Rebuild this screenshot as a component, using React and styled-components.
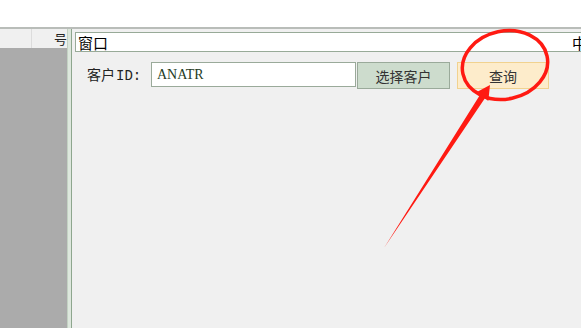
import React from "react";
import styled, { createGlobalStyle } from "styled-components";

const GlobalStyle = createGlobalStyle`
  html, body {
    margin: 0;
    padding: 0;
    background: #ffffff;
    overflow: hidden;
  }
`;

const Page = styled.div`
  position: relative;
  width: 581px;
  height: 328px;
  display: flex;
  flex-direction: column;
  font-family: "Noto Sans CJK SC", "Noto Sans", sans-serif;
  overflow: hidden;
`;

const TopBlank = styled.div`
  height: 27px;
  background: #ffffff;
`;

const Workspace = styled.div`
  flex: 1;
  display: flex;
  border-top: 2px solid #b9bdb9;
`;

const LeftPane = styled.div`
  width: 67px;
  display: flex;
  flex-direction: column;
`;

const LeftHeader = styled.div`
  height: 19px;
  display: flex;
  background: #f0f0f0;
`;

const HeaderCell = styled.div`
  width: ${(p) => p.w}px;
  border-right: ${(p) => (p.divider ? "1px solid #dcdcdc" : "none")};
  font-size: 13px;
  line-height: 19px;
  color: #222;
  overflow: hidden;
  white-space: nowrap;
  text-align: ${(p) => p.align || "left"};
`;

const LeftBody = styled.div`
  flex: 1;
  background: #ababab;
`;

const Splitter = styled.div`
  width: 3px;
  background: #dde7dd;
  border-left: 1px solid #c3d2c3;
  border-right: 1px solid #8ea68e;
`;

const RightPane = styled.div`
  flex: 1;
  background: #f0f0f0;
  padding: 3px 0 0 3px;
  display: flex;
  flex-direction: column;
`;

const TitleBox = styled.div`
  height: 18px;
  background: #ffffff;
  border: 1px solid #98aa98;
  border-right: none;
  display: flex;
  justify-content: space-between;
  align-items: center;
  padding-left: 2px;
  font-size: 15px;
  color: #000;
  overflow: hidden;
`;

const EdgeGlyph = styled.span`
  margin-right: -6px;
`;

const FormRow = styled.div`
  margin-top: 10px;
  padding-left: 12px;
  display: flex;
  align-items: flex-start;
`;

const Label = styled.span`
  width: 64px;
  font-size: 14px;
  line-height: 25px;
  color: #222;
  white-space: nowrap;
`;

const LabelCode = styled.span`
  font-family: "Liberation Mono", "DejaVu Sans Mono", monospace;
  font-size: 14px;
  margin-left: 1px;
`;

const Input = styled.div`
  width: 198px;
  height: 23px;
  border: 1px solid #9aaa9a;
  background: #ffffff;
  font-family: "Liberation Serif", "DejaVu Serif", serif;
  font-size: 14px;
  line-height: 23px;
  color: #1e3a1e;
  padding-left: 5px;
`;

const Button = styled.div`
  width: ${(p) => p.w}px;
  height: 25px;
  margin-left: ${(p) => p.gap}px;
  display: flex;
  align-items: center;
  justify-content: center;
  font-size: 14px;
  color: #333;
  background: ${(p) => (p.primary ? "#fdeccb" : "#cddccd")};
  border: 1px solid ${(p) => (p.primary ? "#f1d28f" : "#9aaa9a")};
`;

const Overlay = styled.svg`
  position: absolute;
  left: 0;
  top: 0;
  pointer-events: none;
`;

export default function App() {
  return (
    <Page>
      <GlobalStyle />
      <TopBlank />
      <Workspace>
        <LeftPane>
          <LeftHeader>
            <HeaderCell w={31} divider />
            <HeaderCell w={36} align="right">
              号
            </HeaderCell>
          </LeftHeader>
          <LeftBody />
        </LeftPane>
        <Splitter />
        <RightPane>
          <TitleBox>
            <span>窗口</span>
            <EdgeGlyph>中</EdgeGlyph>
          </TitleBox>
          <FormRow>
            <Label>
              客户<LabelCode>ID:</LabelCode>
            </Label>
            <Input>ANATR</Input>
            <Button w={91} gap={1}>
              选择客户
            </Button>
            <Button w={90} gap={7} primary>
              查询
            </Button>
          </FormRow>
        </RightPane>
      </Workspace>
      <Overlay width="581" height="328" viewBox="0 0 581 328">
        <ellipse
          cx="505"
          cy="65"
          rx="43"
          ry="34"
          fill="none"
          stroke="#ff1a12"
          strokeWidth="3.5"
          transform="rotate(-12 505 65)"
        />
        <polygon
          points="384,248 484.9,98.3 488.3,101 490,85 476,92.5 479.9,95.1"
          fill="#ff1a12"
        />
      </Overlay>
    </Page>
  );
}
